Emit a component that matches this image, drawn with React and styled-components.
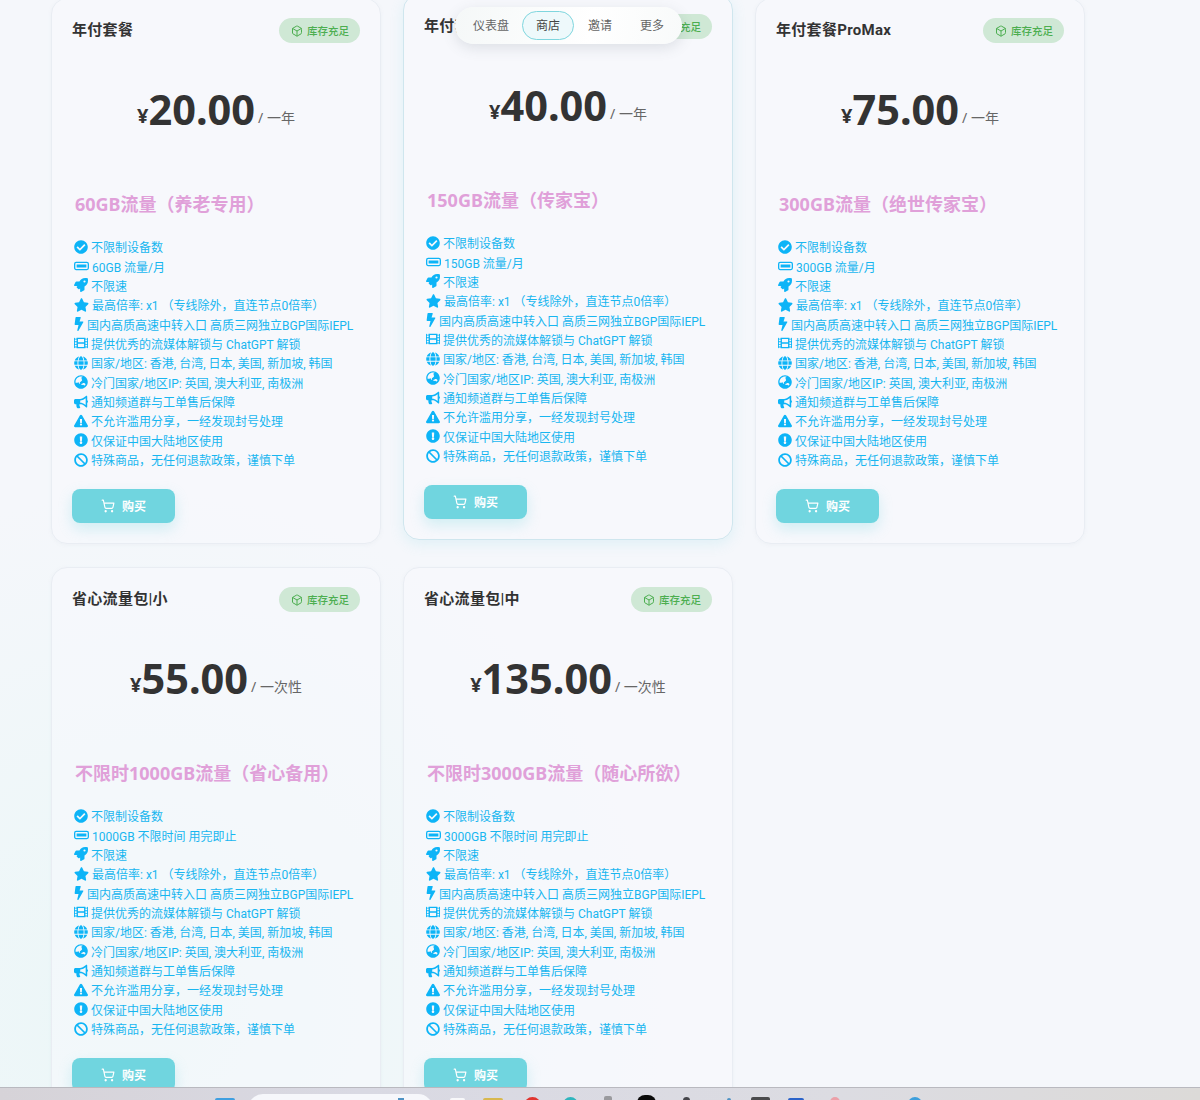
import React from 'react'
import styled, { createGlobalStyle } from 'styled-components'
import { Box, ShoppingCart } from 'lucide-react'
import {
  FaCheckCircle, FaRocket, FaStar, FaBolt, FaFilm, FaGlobe, FaGlobeAsia,
  FaBullhorn, FaExclamationTriangle, FaExclamationCircle, FaBan,
} from 'react-icons/fa'

const GlobalStyle = createGlobalStyle`
  html, body {
    margin: 0;
    padding: 0;
    background: #f5f7fb;
    font-family: "Noto Sans", "Noto Sans CJK SC", sans-serif;
  }
  * { box-sizing: border-box; }
`

const Page = styled.div`
  position: relative;
  width: 1200px;
  height: 1100px;
  overflow: hidden;
  background:
    radial-gradient(circle at 12% 92%, #ebf6f7 0, rgba(237, 247, 248, 0.75) 220px, rgba(245, 247, 251, 0) 520px),
    #f5f7fb;
`

const Grid = styled.main`
  display: grid;
  grid-template-columns: repeat(3, 330px);
  column-gap: 22px;
  row-gap: 23px;
  padding-left: 51px;
  margin-top: -2px;
`

const Card = styled.section`
  display: flex;
  flex-direction: column;
  align-items: flex-start;
  height: 546px;
  padding: 19px 20px;
  background: rgba(247, 249, 253, 0.55);
  border: 1px solid ${p => (p.$raised ? '#cfe6ee' : '#e9edf3')};
  border-radius: 16px;
  box-shadow: ${p => (p.$raised ? '0 4px 14px rgba(112, 214, 223, 0.16)' : '0 1px 4px rgba(120, 130, 150, 0.06)')};
  transform: ${p => (p.$raised ? 'translateY(-4px)' : 'none')};
`

const CardHead = styled.header`
  display: flex;
  align-items: center;
  justify-content: space-between;
  width: 100%;
  height: 25px;
`

const PlanName = styled.h2`
  margin: -5px 0 0;
  font-family: Roboto, "Noto Sans CJK SC", sans-serif;
  font-size: 15px;
  font-weight: 700;
  letter-spacing: 0.3px;
  color: #333;
`

const Stock = styled.span`
  display: flex;
  align-items: center;
  gap: 4px;
  height: 25px;
  padding: 0 11px 0 12px;
  border-radius: 13px;
  background: #cfe8d5;
  color: #4cae50;
  font-size: 10.5px;
  font-weight: 500;
`

const PriceRow = styled.div`
  width: 100%;
  height: 56px;
  margin-top: 38px;
  line-height: 56px;
  text-align: center;
  white-space: nowrap;
  color: #333;
`

const Currency = styled.span`
  font-size: 20px;
  font-weight: 700;
  line-height: 1;
  vertical-align: 2px;
`

const Amount = styled.span`
  font-size: 41.5px;
  font-weight: 700;
`

const Period = styled.span`
  margin-left: 3px;
  font-size: 14px;
  line-height: 1;
  color: #666;
  vertical-align: 2px;
`

const FeatureTitle = styled.h3`
  margin: 55px 0 0 3px;
  height: 25px;
  line-height: 25px;
  font-size: 18px;
  font-weight: 700;
  color: #e0a0d9;
`

const List = styled.ul`
  list-style: none;
  margin: 20px 0 0 2px;
  padding: 0;
  font-family: Roboto, "Noto Sans CJK SC", sans-serif;
`

const Item = styled.li`
  display: flex;
  align-items: center;
  gap: 3px;
  height: 19.36px;
  font-size: 12px;
  white-space: pre;
  color: #18b6f0;

  svg {
    flex: none;
    width: ${p => p.$iconWidth}px;
    height: 14px;
    color: #0db4f7;
  }
`

const BuyButton = styled.button`
  display: flex;
  align-items: center;
  justify-content: center;
  gap: 7px;
  flex: none;
  width: 103px;
  height: 34px;
  margin-top: 20px;
  border: 0;
  border-radius: 8px;
  background: #70d5df;
  box-shadow: 0 6px 14px rgba(112, 213, 223, 0.28);
  color: #fff;
  font-family: inherit;
  font-size: 12px;
  font-weight: 700;
`

const Nav = styled.nav`
  position: absolute;
  left: 455px;
  top: 7px;
  display: flex;
  align-items: center;
  width: 227px;
  height: 37px;
  padding: 0 4px;
  border-radius: 19px;
  background: linear-gradient(100deg, #f5f8f8, #ffffff 60%, #f8fafa);
  box-shadow: 0 4px 14px rgba(90, 100, 110, 0.16);
`

const NavItem = styled.a`
  flex: none;
  height: 29px;
  padding: 0 13px;
  line-height: 28px;
  font-size: 12px;
  color: ${p => (p.$active ? '#444' : '#666')};
  border: 1px solid ${p => (p.$active ? '#7fd6de' : 'transparent')};
  border-radius: 15px;
  background: ${p => (p.$active ? '#eef9fb' : 'transparent')};

  &:first-child {
    padding-right: 12px;
  }
`

const Taskbar = styled.footer`
  position: absolute;
  left: 0;
  right: 0;
  bottom: 0;
  display: flex;
  height: 13px;
  overflow: hidden;
  border-top: 1px solid #b9b9bf;
  background: linear-gradient(90deg, #d6d3d8, #d9d9e3 30%, #dcdce2 70%, #dcdad8);
`

const TaskIcon = styled.span`
  flex: none;
  width: ${p => p.$w}px;
  height: 20px;
  margin-left: ${p => p.$gap}px;
  margin-top: ${p => p.$top}px;
  background: ${p => p.$bg};
  border-radius: ${p => p.$round || 2}px;
`

const SearchPill = styled.span`
  flex: none;
  display: flex;
  justify-content: flex-end;
  width: 185px;
  height: 30px;
  margin-left: 13px;
  margin-top: 6px;
  padding: 4px 29px 0 0;
  border-radius: 15px;
  background: #f6f7fb;
`

const SearchMark = styled.span`
  width: 6px;
  height: 12px;
  background: #4f93c4;
`

const Battery = () => (
  <svg viewBox="0 0 16 14">
    <rect x="0.7" y="3.2" width="14.6" height="7.6" rx="1.6" fill="none" stroke="currentColor" strokeWidth="1.4" />
    <rect x="2.8" y="5.4" width="10.4" height="3.2" fill="currentColor" />
  </svg>
)

const features = traffic => [
  [<FaCheckCircle />, '不限制设备数', 14],
  [<Battery />, traffic, 15],
  [<FaRocket />, '不限速', 14],
  [<FaStar />, '最高倍率: x1 （专线除外，直连节点0倍率）', 15],
  [<FaBolt />, '国内高质高速中转入口 高质三网独立BGP国际IEPL', 10],
  [<FaFilm />, '提供优秀的流媒体解锁与 ChatGPT 解锁', 14],
  [<FaGlobe />, '国家/地区: 香港, 台湾, 日本, 美国, 新加坡, 韩国', 14],
  [<FaGlobeAsia />, '冷门国家/地区IP: 英国, 澳大利亚, 南极洲', 14],
  [<FaBullhorn />, '通知频道群与工单售后保障', 14],
  [<FaExclamationTriangle />, '不允许滥用分享，一经发现封号处理', 14],
  [<FaExclamationCircle />, '仅保证中国大陆地区使用', 14],
  [<FaBan />, '特殊商品，无任何退款政策，谨慎下单', 14],
]

const plans = [
  { name: '年付套餐', price: '20.00', period: '一年', title: '60GB流量（养老专用）', traffic: '60GB 流量/月' },
  { name: '年付套餐', price: '40.00', period: '一年', title: '150GB流量（传家宝）', traffic: '150GB 流量/月', raised: true },
  { name: '年付套餐ProMax', price: '75.00', period: '一年', title: '300GB流量（绝世传家宝）', traffic: '300GB 流量/月' },
  { name: '省心流量包|小', price: '55.00', period: '一次性', title: '不限时1000GB流量（省心备用）', traffic: '1000GB 不限时间 用完即止' },
  { name: '省心流量包|中', price: '135.00', period: '一次性', title: '不限时3000GB流量（随心所欲）', traffic: '3000GB 不限时间 用完即止' },
]

const taskIcons = [
  { w: 15, gap: 17, top: 10, bg: '#f8f8fa' },
  { w: 20, gap: 18, top: 10, bg: '#d8b84e' },
  { w: 17, gap: 21, top: 9, bg: '#e0352f', round: 10 },
  { w: 15, gap: 22, top: 9, bg: '#2fb5bd', round: 10 },
  { w: 8, gap: 26, top: 8, bg: '#9a9a9e' },
  { w: 19, gap: 25, top: 7, bg: '#0a0a0a', round: 8 },
  { w: 7, gap: 27, top: 9, bg: '#45454a', round: 4 },
  { w: 4, gap: 37, top: 10, bg: '#4f93c4' },
  { w: 19, gap: 20, top: 9, bg: '#4a4a4c' },
  { w: 16, gap: 18, top: 10, bg: '#2b63c9' },
  { w: 10, gap: 26, top: 9, bg: '#eba0a8', round: 5 },
  { w: 14, gap: 68, top: 9, bg: '#3d9fdc', round: 8 },
]

export default function App() {
  return (
    <Page>
      <GlobalStyle />
      <Grid>
        {plans.map(plan => (
          <Card key={plan.price} $raised={plan.raised}>
            <CardHead>
              <PlanName>{plan.name}</PlanName>
              <Stock>
                <Box size={12} strokeWidth={2} />
                库存充足
              </Stock>
            </CardHead>
            <PriceRow>
              <Currency>¥</Currency>
              <Amount>{plan.price}</Amount>
              <Period>/ {plan.period}</Period>
            </PriceRow>
            <FeatureTitle>{plan.title}</FeatureTitle>
            <List>
              {features(plan.traffic).map(([icon, text, iconWidth]) => (
                <Item key={text} $iconWidth={iconWidth}>
                  {icon}
                  {text}
                </Item>
              ))}
            </List>
            <BuyButton>
              <ShoppingCart size={14} strokeWidth={2} />
              购买
            </BuyButton>
          </Card>
        ))}
      </Grid>

      <Nav>
        <NavItem>仪表盘</NavItem>
        <NavItem $active>商店</NavItem>
        <NavItem>邀请</NavItem>
        <NavItem>更多</NavItem>
      </Nav>

      <Taskbar>
        <TaskIcon $w={20} $gap={215} $top={10} $bg="#3f9fe0" />
        <SearchPill>
          <SearchMark />
        </SearchPill>
        {taskIcons.map(icon => (
          <TaskIcon key={icon.bg} $w={icon.w} $gap={icon.gap} $top={icon.top} $bg={icon.bg} $round={icon.round} />
        ))}
      </Taskbar>
    </Page>
  )
}
